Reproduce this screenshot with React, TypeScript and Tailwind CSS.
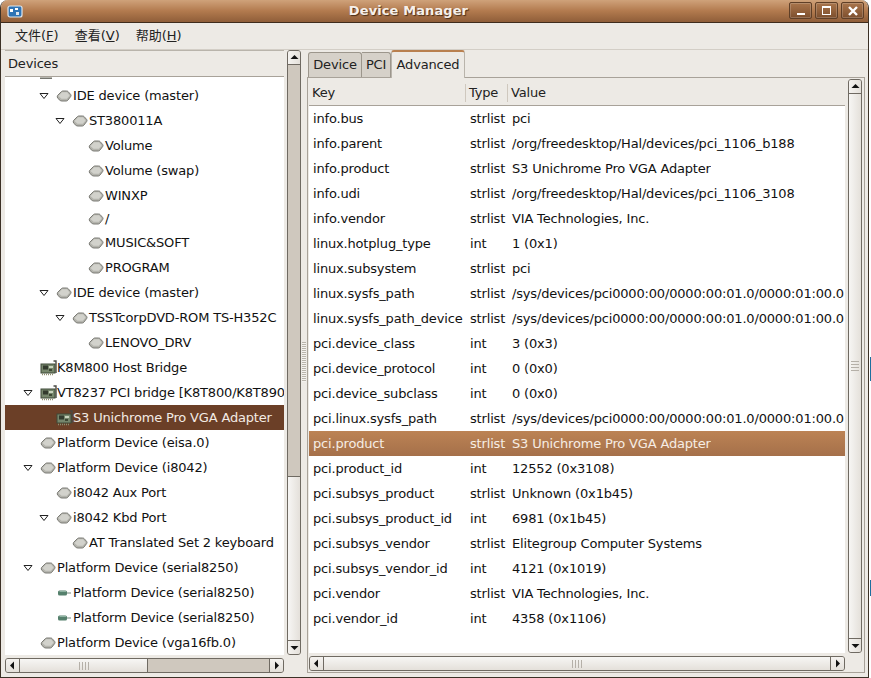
import React from 'react';

type TreeRow = {
  label: string;
  level: number;
  icon: 'drive' | 'card' | 'serial';
  open?: boolean;
  selected?: boolean;
  short?: boolean;
};

const treeRows: TreeRow[] = [
  { label: 'IDE device (master)', level: 1, icon: 'drive', open: true },
  { label: 'ST380011A', level: 2, icon: 'drive', open: true },
  { label: 'Volume', level: 3, icon: 'drive' },
  { label: 'Volume (swap)', level: 3, icon: 'drive' },
  { label: 'WINXP', level: 3, icon: 'drive' },
  { label: '/', level: 3, icon: 'drive', short: true },
  { label: 'MUSIC&SOFT', level: 3, icon: 'drive' },
  { label: 'PROGRAM', level: 3, icon: 'drive' },
  { label: 'IDE device (master)', level: 1, icon: 'drive', open: true },
  { label: 'TSSTcorpDVD-ROM TS-H352C', level: 2, icon: 'drive', open: true },
  { label: 'LENOVO_DRV', level: 3, icon: 'drive' },
  { label: 'K8M800 Host Bridge', level: 0, icon: 'card' },
  { label: 'VT8237 PCI bridge [K8T800/K8T890', level: 0, icon: 'card', open: true },
  { label: 'S3 Unichrome Pro VGA Adapter', level: 1, icon: 'card', selected: true },
  { label: 'Platform Device (eisa.0)', level: 0, icon: 'drive' },
  { label: 'Platform Device (i8042)', level: 0, icon: 'drive', open: true },
  { label: 'i8042 Aux Port', level: 1, icon: 'drive' },
  { label: 'i8042 Kbd Port', level: 1, icon: 'drive', open: true },
  { label: 'AT Translated Set 2 keyboard', level: 2, icon: 'drive' },
  { label: 'Platform Device (serial8250)', level: 0, icon: 'drive', open: true },
  { label: 'Platform Device (serial8250)', level: 1, icon: 'serial' },
  { label: 'Platform Device (serial8250)', level: 1, icon: 'serial' },
  { label: 'Platform Device (vga16fb.0)', level: 0, icon: 'drive' },
];

const levelPad = ['pl-[18px]', 'pl-[34px]', 'pl-[50px]', 'pl-[66px]'];

const props: [string, string, string][] = [
  ['info.bus', 'strlist', 'pci'],
  ['info.parent', 'strlist', '/org/freedesktop/Hal/devices/pci_1106_b188'],
  ['info.product', 'strlist', 'S3 Unichrome Pro VGA Adapter'],
  ['info.udi', 'strlist', '/org/freedesktop/Hal/devices/pci_1106_3108'],
  ['info.vendor', 'strlist', 'VIA Technologies, Inc.'],
  ['linux.hotplug_type', 'int', '1 (0x1)'],
  ['linux.subsystem', 'strlist', 'pci'],
  ['linux.sysfs_path', 'strlist', '/sys/devices/pci0000:00/0000:00:01.0/0000:01:00.0'],
  ['linux.sysfs_path_device', 'strlist', '/sys/devices/pci0000:00/0000:00:01.0/0000:01:00.0'],
  ['pci.device_class', 'int', '3 (0x3)'],
  ['pci.device_protocol', 'int', '0 (0x0)'],
  ['pci.device_subclass', 'int', '0 (0x0)'],
  ['pci.linux.sysfs_path', 'strlist', '/sys/devices/pci0000:00/0000:00:01.0/0000:01:00.0'],
  ['pci.product', 'strlist', 'S3 Unichrome Pro VGA Adapter'],
  ['pci.product_id', 'int', '12552 (0x3108)'],
  ['pci.subsys_product', 'strlist', 'Unknown (0x1b45)'],
  ['pci.subsys_product_id', 'int', '6981 (0x1b45)'],
  ['pci.subsys_vendor', 'strlist', 'Elitegroup Computer Systems'],
  ['pci.subsys_vendor_id', 'int', '4121 (0x1019)'],
  ['pci.vendor', 'strlist', 'VIA Technologies, Inc.'],
  ['pci.vendor_id', 'int', '4358 (0x1106)'],
];

function DriveIcon() {
  return (
    <svg width="16" height="14" viewBox="0 0 16 14">
      <path d="M1.5 6.5 L5.5 2.5 Q6 2 7 2 L10.5 2 Q11.5 2 12 2.5 L14.7 5.5 Q15.3 6.5 14.7 7.5 L12 11 Q11.3 12 10.3 12 L6 12 Q5 12 4.2 11.5 L1.8 9.3 Q0.8 8 1.5 6.5 Z" fill="#b4b4ad" stroke="#7a7a74" strokeWidth="1" />
      <path d="M2.5 7 L6.2 3.2 L11 3.2 L13.6 6.4 L10.8 9.8 L5.5 9.8 Z" fill="#d2d2cc" />
    </svg>
  );
}

function CardIcon() {
  return (
    <svg width="17" height="16" viewBox="0 0 17 16">
      <path d="M13.5 1 L16 1 L16 13" fill="none" stroke="#4a4a44" strokeWidth="1.4" />
      <rect x="1" y="4" width="14" height="9" fill="#76866c" stroke="#3f4a39" strokeWidth="1" />
      <rect x="3" y="5.5" width="5" height="4" fill="#333b2e" />
      <rect x="9" y="6" width="4" height="2" fill="#c9d3bd" />
      <rect x="9" y="9" width="3" height="2" fill="#3d4734" />
      <path d="M2 14.5 L14 14.5" stroke="#8f8f70" strokeWidth="1.4" strokeDasharray="1 1" />
    </svg>
  );
}

function SerialIcon() {
  return (
    <svg width="14" height="8" viewBox="0 0 14 8">
      <rect x="1" y="1.5" width="9" height="5" rx="1.5" fill="#55806c" />
      <path d="M10 4 L14 4" stroke="#9aa8a0" strokeWidth="1.4" />
      <path d="M2.5 2.5 L9 2.5" stroke="#8fb3a2" strokeWidth="1" />
    </svg>
  );
}

function Arrow({ dir }: { dir: 'up' | 'down' | 'left' | 'right' }) {
  const points = {
    up: '0.5,6 4.5,2 8.5,6',
    down: '0.5,3 8.5,3 4.5,7',
    left: '6,0.5 6,8.5 2,4.5',
    right: '3,0.5 3,8.5 7,4.5',
  }[dir];
  return (
    <svg width="9" height="9" viewBox="0 0 9 9">
      <polygon points={points} fill="#111" />
    </svg>
  );
}

function Expander() {
  return (
    <svg width="10" height="8" viewBox="0 0 10 8">
      <polygon points="1,1.5 9,1.5 5,6.5" fill="#fff" stroke="#222" strokeWidth="1" />
    </svg>
  );
}

function Tree() {
  return (
    <div className="flex-1 overflow-hidden bg-white">
      <div className="h-[6px] overflow-hidden pl-[35px] flex items-start">
        <div className="w-[12px] h-[2px] bg-[#b4b4ad] border-b border-[#75756f]" />
      </div>
      {treeRows.map((row, i) => (
        <div
          key={i}
          className={`flex items-center whitespace-nowrap overflow-hidden ${row.short ? 'h-[22px]' : 'h-[25px]'} ${levelPad[row.level]} ${
            row.selected ? 'bg-[#6b3f27] text-[#f3ebe4]' : 'text-[#111]'
          }`}
        >
          <span className="w-[16px] shrink-0 flex items-center">{row.open && <Expander />}</span>
          <span className="w-[18px] shrink-0 flex items-center justify-center">
            {row.icon === 'drive' && <DriveIcon />}
            {row.icon === 'card' && <CardIcon />}
            {row.icon === 'serial' && <SerialIcon />}
          </span>
          <span>{row.label}</span>
        </div>
      ))}
    </div>
  );
}

function VScrollbar({ thumb }: { thumb: 'left' | 'right' }) {
  return (
    <div className={`w-[14px] flex flex-col border border-[#6f6a62] rounded-[3px] bg-[#cfc8be] overflow-hidden ${thumb === 'right' ? '-mt-px' : ''}`}>
      <div className="h-[14px] shrink-0 flex items-center justify-center bg-gradient-to-r from-[#f5f3f0] to-[#e4e0da] border-b border-[#6f6a62]">
        <Arrow dir="up" />
      </div>
      {thumb === 'left' ? (
        <>
          <div className="h-[411px] shrink-0" />
          <div className="flex-1 bg-gradient-to-r from-[#f7f6f4] to-[#e4e0da] border-t border-[#6f6a62]" />
        </>
      ) : (
        <div className="flex-1 flex flex-col items-center justify-center gap-[2px] bg-gradient-to-r from-[#f7f6f4] to-[#e4e0da]">
          <div className="w-[8px] h-px bg-[#b5b0a8]" />
          <div className="w-[8px] h-px bg-[#b5b0a8]" />
          <div className="w-[8px] h-px bg-[#b5b0a8]" />
          <div className="w-[8px] h-px bg-[#b5b0a8]" />
        </div>
      )}
      <div className="h-[14px] shrink-0 flex items-center justify-center bg-gradient-to-r from-[#f5f3f0] to-[#e4e0da] border-t border-[#6f6a62]">
        <Arrow dir="down" />
      </div>
    </div>
  );
}

function HScrollbar({ thumbWidth }: { thumbWidth?: string }) {
  return (
    <div className="h-[15px] flex border border-[#6f6a62] rounded-[3px] bg-[#cfc8be] overflow-hidden">
      <div className="w-[14px] shrink-0 flex items-center justify-center bg-gradient-to-b from-[#f5f3f0] to-[#e4e0da] border-r border-[#6f6a62]">
        <Arrow dir="left" />
      </div>
      <div className={`${thumbWidth ?? 'flex-1'} flex items-center justify-center gap-[2px] bg-gradient-to-b from-[#f7f6f4] to-[#e4e0da] ${thumbWidth ? 'border-r border-[#6f6a62]' : ''}`}>
        <div className="w-px h-[8px] bg-[#b5b0a8]" />
        <div className="w-px h-[8px] bg-[#b5b0a8]" />
        <div className="w-px h-[8px] bg-[#b5b0a8]" />
        <div className="w-px h-[8px] bg-[#b5b0a8]" />
      </div>
      {thumbWidth && <div className="flex-1" />}
      <div className="w-[14px] shrink-0 flex items-center justify-center bg-gradient-to-b from-[#f5f3f0] to-[#e4e0da] border-l border-[#6f6a62]">
        <Arrow dir="right" />
      </div>
    </div>
  );
}

function TitleButton({ children }: { children: React.ReactNode }) {
  return (
    <div className="w-[23px] h-[17px] flex items-center justify-center rounded-[2px] border border-[#5f3f27] bg-gradient-to-b from-[#a9754c] via-[#94623c] to-[#7c4f2e] shadow-[inset_0_0_0_1px_rgba(255,255,255,0.18)]">
      {children}
    </div>
  );
}

export default function App() {
  return (
    <div className="relative w-[871px] h-[678px] bg-white overflow-hidden text-[13px] tracking-[-0.17px] font-['DejaVu_Sans',sans-serif]">
      {/* desktop peeking out beside the window */}
      <div className="absolute left-[870px] top-[357px] w-px h-[24px] bg-[#1d6f9e]" />
      <div className="absolute left-[870px] top-[580px] w-px h-[16px] bg-[#1d6f9e]" />

      <div className="w-[869px] h-[678px] flex flex-col bg-[#edeae5] border-x border-b border-[#3c3126] rounded-t-[8px] overflow-hidden">
        <div className="h-[23px] shrink-0 relative flex items-center justify-center pr-[52px] bg-gradient-to-b from-[#cfa27a] via-[#b27a4e] to-[#8f5e39] border-b border-[#3f2c1c]">
          <span className="font-bold text-[#f6f0ea] tracking-[0.1px] [text-shadow:1px_1px_1px_#4a2e18]">Device Manager</span>
          <svg width="16" height="14" viewBox="0 0 16 14" className="absolute left-[6px] top-[5px]">
            <rect x="1" y="1" width="14" height="11" rx="2" fill="#2f74b5" stroke="#dfe7ee" strokeWidth="1.2" />
            <rect x="3" y="4" width="3" height="3" fill="#fff" />
            <rect x="8" y="3" width="3" height="2" fill="#fff" />
            <rect x="9" y="7" width="3" height="3" fill="#dfe7ee" />
          </svg>
          <div className="absolute right-[4px] top-[2px] flex gap-[3px]">
            <TitleButton>
              <div className="w-[8px] h-[2px] mt-[7px] bg-white" />
            </TitleButton>
            <TitleButton>
              <div className="w-[9px] h-[9px] border border-white border-t-2" />
            </TitleButton>
            <TitleButton>
              <svg width="10" height="10" viewBox="0 0 10 10">
                <path d="M1 1 L9 9 M9 1 L1 9" stroke="#fff" strokeWidth="2.4" />
              </svg>
            </TitleButton>
          </div>
        </div>

        <div className="h-[27px] shrink-0 flex items-center gap-[16px] pl-[14px] border-b border-[#d3cec6] text-[13px] tracking-normal text-[#222] font-['DejaVu_Sans','Noto_Sans_CJK_SC',sans-serif]">
          <span>文件(<span className="underline">F</span>)</span>
          <span>查看(<span className="underline">V</span>)</span>
          <span>帮助(<span className="underline">H</span>)</span>
        </div>

        <div className="flex-1 min-h-0 flex pl-[4px] pr-[3px] pb-[4px]">
          <div className="w-[296px] shrink-0 flex flex-col gap-[3px]">
            <div className="flex-1 min-h-0 flex gap-[3px]">
              <div className="w-[279px] flex flex-col border-t border-[#b9b4ab] text-[#222]">
                <div className="h-[26px] shrink-0 flex items-center pl-[3px] bg-[#edeae5] border-b border-[#a8a299]">Devices</div>
                <Tree />
              </div>
              <VScrollbar thumb="left" />
            </div>
            <div className="w-[279px]">
              <HScrollbar thumbWidth="w-[128px]" />
            </div>
          </div>

          <div className="w-[6px] shrink-0 flex items-center justify-center">
            <div className="w-[4px] h-[40px] bg-[repeating-linear-gradient(to_bottom,#b9b4ab_0,#b9b4ab_1px,#f4f2ef_1px,#f4f2ef_2px)]" />
          </div>

          <div className="flex-1 min-w-0 flex flex-col">
            <div className="h-[27px] shrink-0 flex items-end pl-[1px] text-[#222]">
              <div className="h-[25px] w-[54px] flex items-center justify-center bg-[#d6d1c9] border border-[#9c968c] border-b-0 rounded-t-[3px]">Device</div>
              <div className="h-[25px] w-[29px] flex items-center justify-center bg-[#d6d1c9] border-t border-r border-[#9c968c] rounded-tr-[3px]">PCI</div>
              <div className="h-[28px] w-[74px] flex items-center justify-center bg-[#edeae5] border-t-2 border-t-[#b9804f] border-x border-x-[#b9b4ab] rounded-t-[3px] relative z-10 -mb-px">Advanced</div>
            </div>
            <div className="flex-1 min-h-0 flex flex-col gap-[3px] border border-[#a8a299] pl-px pr-[2px] pt-[2px] pb-px">
              <div className="flex-1 min-h-0 flex gap-[3px]">
                <div className="flex-1 min-w-0 flex flex-col">
                  <div className="h-[26px] shrink-0 flex items-center border-b border-[#a8a299] text-[#222]">
                    <div className="w-[157px] pl-[3px] border-r border-[#cfc8be] h-[18px] flex items-center">Key</div>
                    <div className="w-[42px] pl-[3px] border-r border-[#cfc8be] h-[18px] flex items-center">Type</div>
                    <div className="pl-[3px]">Value</div>
                  </div>
                  <div className="flex-1 bg-white overflow-hidden">
                    {props.map(([key, type, value]) => (
                      <div
                        key={key}
                        className={`h-[25px] flex items-center whitespace-nowrap ${
                          key === 'pci.product' ? 'bg-gradient-to-b from-[#bc8354] to-[#a5704a] text-[#f6ede4]' : 'text-[#111]'
                        }`}
                      >
                        <div className="w-[157px] pl-[4px] shrink-0 overflow-hidden">{key}</div>
                        <div className="w-[42px] pl-[4px] shrink-0">{type}</div>
                        <div className="pl-[4px] overflow-hidden">{value}</div>
                      </div>
                    ))}
                  </div>
                </div>
                <VScrollbar thumb="right" />
              </div>
              <div className="mr-[17px]">
                <HScrollbar />
              </div>
            </div>
          </div>
        </div>
      </div>
    </div>
  );
}
